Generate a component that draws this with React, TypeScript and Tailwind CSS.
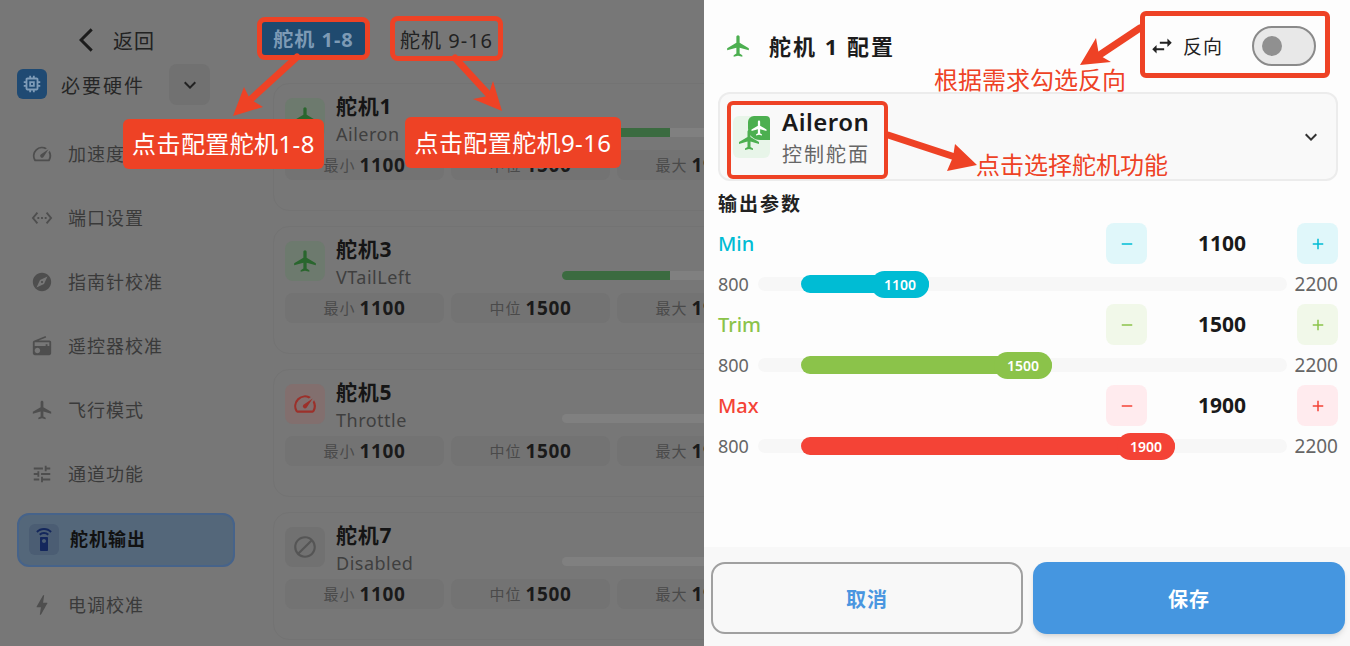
import React from 'react';
import {
  MdAirplanemodeActive,
  MdBlock,
  MdBolt,
  MdExplore,
  MdKeyboardArrowDown,
  MdMemory,
  MdOutlineSpeed,
  MdRadio,
  MdSettingsEthernet,
  MdSettingsRemote,
  MdSwapHoriz,
  MdTune,
  MdAdd,
  MdRemove,
  MdArrowBackIosNew,
} from 'react-icons/md';

const navItems = [
  { label: '加速度计校准', icon: MdOutlineSpeed },
  { label: '端口设置', icon: MdSettingsEthernet },
  { label: '指南针校准', icon: MdExplore },
  { label: '遥控器校准', icon: MdRadio },
  { label: '飞行模式', icon: MdAirplanemodeActive },
  { label: '通道功能', icon: MdTune },
];

const servoCards = [
  { name: '舵机1', role: 'Aileron', icon: MdAirplanemodeActive, box: 'bg-[#6d7a6e]', tint: 'text-[#2a662e]', fill: 'w-[108px]', offset: true },
  { name: '舵机3', role: 'VTailLeft', icon: MdAirplanemodeActive, box: 'bg-[#6d7a6e]', tint: 'text-[#2a662e]', fill: 'w-[108px]', offset: true },
  { name: '舵机5', role: 'Throttle', icon: MdOutlineSpeed, box: 'bg-[#826f6e]', tint: 'text-[#9c302a]', fill: 'w-0', offset: false },
  { name: '舵机7', role: 'Disabled', icon: MdBlock, box: 'bg-[#717171]', tint: 'text-[#555555]', fill: 'w-0', offset: false },
];

const outputRows = [
  { label: 'Min', value: 1100, text: 'text-[#00bcd4]', soft: 'bg-[#e0f7fa]', solid: 'bg-[#00bcd4]', width: 'w-[128px]' },
  { label: 'Trim', value: 1500, text: 'text-[#8bc34a]', soft: 'bg-[#f1f8e9]', solid: 'bg-[#8bc34a]', width: 'w-[251px]' },
  { label: 'Max', value: 1900, text: 'text-[#f44336]', soft: 'bg-[#ffebee]', solid: 'bg-[#f44336]', width: 'w-[374px]' },
];

const Chip = ({ label, value }: { label: string; value: number }) => (
  <div className="flex h-[30px] w-[159px] shrink-0 items-center justify-center gap-1 rounded-lg bg-[#737373]">
    <span className="text-[15px] tracking-[1px] text-[#4a4a4a]">{label}</span>
    <span className="text-[19px] font-bold tracking-[0.6px] text-[#1a1a1a]">{value}</span>
  </div>
);

const Arrow = ({ points, from, notch }: { points: string; from: [number, number]; notch: [number, number] }) => (
  <>
    <line x1={from[0]} y1={from[1]} x2={notch[0]} y2={notch[1]} stroke="#ee4225" strokeWidth={7} strokeLinecap="round" />
    <polygon points={points} fill="#ee4225" />
  </>
);

const App: React.FC = () => {
  return (
    <div
      className="relative flex h-[646px] w-[1350px] overflow-hidden bg-[#777777]"
      style={{ fontFamily: '"Noto Sans", "Noto Sans CJK SC", sans-serif' }}
    >
      {/* dimmed page */}
      <div className="flex h-full w-[704px] shrink-0 overflow-hidden bg-[#777777]">
        <aside className="w-[261px] shrink-0 pl-[17px]">
          <div className="flex h-[62px] items-end pb-[8px] pl-[55px]">
            <MdArrowBackIosNew className="text-[28px] text-[#1c1c1c]" />
            <span className="ml-[13px] text-[20px] leading-6 tracking-[1px] text-[#222222]">返回</span>
          </div>
          <div className="flex h-[60px] items-start">
            <div className="mt-[7px] flex h-[30px] w-[30px] items-center justify-center rounded-md bg-[#1f4a73]">
              <MdMemory className="text-[22px] text-[#7f9cb8]" />
            </div>
            <span className="ml-[14px] mt-[12px] text-[19px] leading-6 tracking-[2px] text-[#262626]">必要硬件</span>
            <div className="ml-[24px] mt-[2px] flex h-[41px] w-[41px] items-center justify-center rounded-lg bg-[#717171]">
              <MdKeyboardArrowDown className="text-[24px] text-[#222222]" />
            </div>
          </div>
          {navItems.map(({ label, icon: Icon }) => (
            <div key={label} className="flex h-[64px] items-center pl-[14px]">
              <Icon className="text-[22px] text-[#4e4e4e]" />
              <span className="ml-[15px] whitespace-nowrap text-[18px] tracking-[1px] text-[#3a3a3a]">{label}</span>
            </div>
          ))}
          <div className="flex h-[67px] items-center">
            <div className="flex h-[54px] w-[218px] items-center rounded-xl border-2 border-[#46638a] bg-[#54677a] pl-[10px]">
              <div className="flex h-[31px] w-[30px] items-center justify-center rounded-md bg-[#4b5d73]">
                <MdSettingsRemote className="text-[24px] text-[#14275c]" />
              </div>
              <span className="ml-[11px] text-[18px] font-bold tracking-[1px] text-[#111111]">舵机输出</span>
            </div>
          </div>
          <div className="flex h-[64px] items-center pl-[12px]">
            <MdBolt className="text-[26px] text-[#4e4e4e]" />
            <span className="ml-[13px] text-[18px] tracking-[1px] text-[#3a3a3a]">电调校准</span>
          </div>
        </aside>

        <main className="min-w-0 flex-1">
          <div className="flex gap-[28px] pt-[21px]">
            <div className="flex h-[35px] w-[105px] items-center justify-center bg-[#1f4a6f] pt-[3px] text-[20px] font-bold tracking-[1px] text-[#7d9ab5]">
              舵机 1-8
            </div>
            <div className="flex h-[35px] w-[105px] items-center justify-center whitespace-nowrap pt-[5px] text-[20px] tracking-[1px] text-[#222222]">
              舵机 9-16
            </div>
          </div>
          <div className="ml-[12px] mt-[27px] flex w-[515px] flex-col gap-[15px]">
            {servoCards.map(({ name, role, icon: Icon, box, tint, fill, offset }) => (
              <div key={name} className="h-[128px] rounded-2xl border border-[#737373] px-[11px] pt-[10px]">
                <div className="flex h-[56px]">
                  <div className={`mt-[4px] flex h-[40px] w-[40px] shrink-0 items-center justify-center rounded-lg ${box}`}>
                    <Icon className={`text-[26px] ${tint}`} />
                  </div>
                  <div className="ml-[11px] w-[226px] shrink-0">
                    <div className="text-[21px] font-bold leading-6 tracking-[0.8px] text-[#151515]">{name}</div>
                    <div className="mt-[4px] text-[18px] leading-6 tracking-[0.5px] text-[#3f3f3f]">{role}</div>
                  </div>
                  <div className="mt-[34px] h-[9px] w-[214px] overflow-hidden rounded-full bg-[#808080]">
                    <div className={`h-full ${fill} ${offset ? 'bg-[#3b6b40]' : ''}`} />
                  </div>
                </div>
                <div className="flex gap-[7px]">
                  <Chip label="最小" value={1100} />
                  <Chip label="中位" value={1500} />
                  <Chip label="最大" value={1900} />
                </div>
              </div>
            ))}
          </div>
        </main>
      </div>

      {/* config sheet */}
      <section className="flex h-full flex-1 flex-col bg-[#fdfdfd]">
        <div className="pl-[14px] pr-[12px]">
          <div className="flex h-[92px] items-center">
            <MdAirplanemodeActive className="ml-[7px] text-[26px] text-[#4caf50]" />
            <span className="ml-[18px] text-[22px] font-bold tracking-[2px] text-[#1c1c1c]">舵机 1 配置</span>
            <MdSwapHoriz className="ml-auto text-[26px] text-[#222222]" />
            <span className="ml-[8px] pt-[3px] text-[19px] tracking-[1px] text-[#222222]">反向</span>
            <div className="ml-[29px] mr-[22px] flex h-[40px] w-[64px] items-center rounded-full border-2 border-[#8a8a8a] bg-[#e8e8e8] pl-[8px]">
              <div className="h-[20px] w-[20px] rounded-full bg-[#909090]" />
            </div>
          </div>
          <div className="flex h-[89px] items-center rounded-xl border-2 border-[#ececec] bg-[#f9f9f9] pl-[13px] pr-[13px]">
            <div className="relative h-[42px] w-[37px] shrink-0 rounded-md bg-[#e8f5e9]">
              <div className="absolute right-0 top-0 flex h-[24px] w-[22px] items-center justify-center rounded-bl-xl rounded-tl-md rounded-tr-sm bg-[#4caf50]">
                <MdAirplanemodeActive className="text-[18px] text-white" />
              </div>
              <MdAirplanemodeActive className="absolute left-[4px] top-[12px] text-[24px] text-[#4caf50]" />
            </div>
            <div className="ml-[12px] pt-[4px]">
              <div className="text-[24px] font-semibold leading-8 tracking-[0.5px] text-[#1a1a1a]">Aileron</div>
              <div className="pt-[1px] text-[20px] leading-8 tracking-[2px] text-[#666666]">控制舵面</div>
            </div>
            <MdKeyboardArrowDown className="ml-auto text-[24px] text-[#333333]" />
          </div>
          <div className="mb-[7px] mt-[11px] text-[19px] font-bold leading-6 tracking-[2px] text-[#222222]">输出参数</div>
          {outputRows.map((row) => (
            <div key={row.label}>
              <div className="flex h-[41px] items-center">
                <span className={`text-[20px] font-medium ${row.text}`}>{row.label}</span>
                <div className={`ml-auto flex h-[41px] w-[41px] items-center justify-center rounded-lg ${row.soft}`}>
                  <MdRemove className={`text-[18px] ${row.text}`} />
                </div>
                <span className="w-[150px] text-center text-[21px] font-bold text-[#1a1a1a]">{row.value}</span>
                <div className={`flex h-[41px] w-[41px] items-center justify-center rounded-lg ${row.soft}`}>
                  <MdAdd className={`text-[18px] ${row.text}`} />
                </div>
              </div>
              <div className="flex h-[40px] items-center">
                <span className="w-[40px] text-[18px] text-[#666666]">800</span>
                <div className="flex h-[14px] flex-1 items-center rounded-full bg-[#f7f7f7] pl-[43px]">
                  <div className={`flex h-[18px] items-center justify-end rounded-full ${row.solid} ${row.width}`}>
                    <div className={`flex h-[27px] w-[58px] items-center justify-center rounded-full text-[14px] font-semibold text-white ${row.solid}`}>
                      {row.value}
                    </div>
                  </div>
                </div>
                <span className="ml-[7px] w-[44px] text-right text-[19px] text-[#666666]">2200</span>
              </div>
            </div>
          ))}
        </div>
        <div className="mt-auto flex h-[99px] gap-[10px] bg-[#f8f8f8] pl-[7px] pr-[5px] pt-[15px]">
          <div className="flex h-[72px] w-[312px] items-center justify-center rounded-[14px] border-2 border-[#a0a0a0] pt-[4px] text-[20px] font-bold tracking-[1px] text-[#4a96e0]">
            取消
          </div>
          <div className="flex h-[72px] w-[312px] items-center justify-center rounded-[14px] bg-[#4596e0] pt-[4px] text-[20px] font-bold tracking-[1px] text-white shadow-md">
            保存
          </div>
        </div>
      </section>

      {/* red annotations drawn over the screenshot */}
      <svg className="pointer-events-none absolute left-0 top-0" width={1350} height={646}>
        <Arrow from={[297, 57]} notch={[250, 100]} points="233,116 244,87 250,99 263,107" />
        <Arrow from={[455, 58]} notch={[490, 96]} points="502,111 473,99 488,96 493,81" />
        <Arrow from={[1140, 28]} notch={[1098, 56]} points="1080,65 1096,38 1099,55 1111,62" />
        <Arrow from={[888, 135]} notch={[955, 157]} points="977,165 955,144 953,157 947,171" />
      </svg>
      <div className="absolute left-[257px] top-[17px] h-[43px] w-[113px] rounded-lg border-[5px] border-[#ee4225]" />
      <div className="absolute left-[390px] top-[16px] h-[45px] w-[113px] rounded-lg border-[5px] border-[#ee4225]" />
      <div className="absolute left-[1140px] top-[11px] h-[67px] w-[190px] rounded-md border-[5px] border-[#ee4225]" />
      <div className="absolute left-[727px] top-[101px] h-[78px] w-[161px] rounded-md border-[4px] border-[#ee4225]" />
      <div className="absolute left-[123px] top-[119px] flex h-[50px] w-[201px] items-center justify-center rounded-md bg-[#ee4225] text-[24px] tracking-[0.4px] text-white">
        点击配置舵机1-8
      </div>
      <div className="absolute left-[405px] top-[117px] flex h-[51px] w-[216px] items-center justify-center rounded-md bg-[#ee4225] text-[24px] tracking-[0.4px] text-white">
        点击配置舵机9-16
      </div>
      <div className="absolute left-[934px] top-[62px] text-[24px] leading-9 text-[#ee4225]">根据需求勾选反向</div>
      <div className="absolute left-[976px] top-[147px] text-[24px] leading-9 text-[#ee4225]">点击选择舵机功能</div>
    </div>
  );
};

export default App;
